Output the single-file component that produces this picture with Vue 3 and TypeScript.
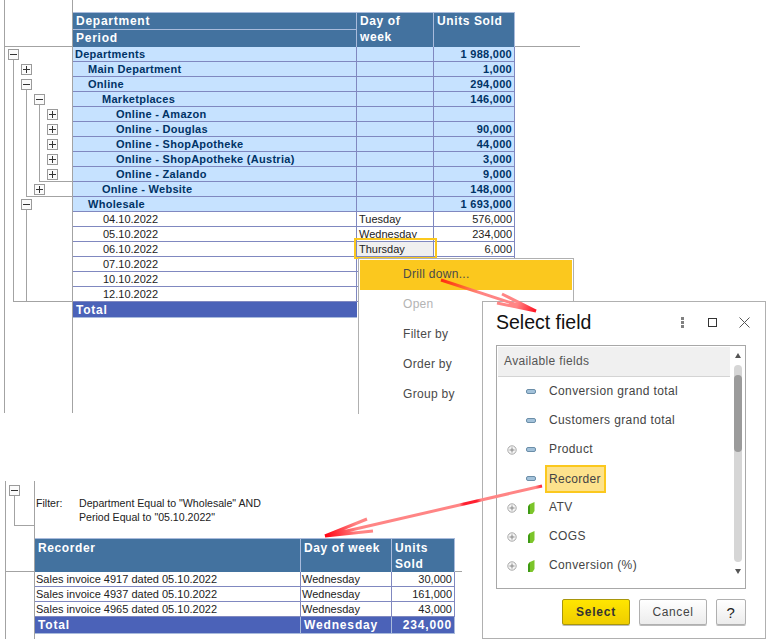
<script setup lang="ts">
interface Row { label: string; indent: number; day?: string; units: string; group: boolean; active?: boolean }
const rows: Row[] = [
  { label: 'Departments', indent: 2, units: '1 988,000', group: true },
  { label: 'Main Department', indent: 15, units: '1,000', group: true },
  { label: 'Online', indent: 15, units: '294,000', group: true },
  { label: 'Marketplaces', indent: 29, units: '146,000', group: true },
  { label: 'Online - Amazon', indent: 43, units: '', group: true },
  { label: 'Online - Douglas', indent: 43, units: '90,000', group: true },
  { label: 'Online - ShopApotheke', indent: 43, units: '44,000', group: true },
  { label: 'Online - ShopApotheke (Austria)', indent: 43, units: '3,000', group: true },
  { label: 'Online - Zalando', indent: 43, units: '9,000', group: true },
  { label: 'Online - Website', indent: 29, units: '148,000', group: true },
  { label: 'Wholesale', indent: 15, units: '1 693,000', group: true },
  { label: '04.10.2022', indent: 30, day: 'Tuesday', units: '576,000', group: false },
  { label: '05.10.2022', indent: 30, day: 'Wednesday', units: '234,000', group: false },
  { label: '06.10.2022', indent: 30, day: 'Thursday', units: '6,000', group: false, active: true },
  { label: '07.10.2022', indent: 30, units: '', group: false },
  { label: '10.10.2022', indent: 30, units: '', group: false },
  { label: '12.10.2022', indent: 30, units: '', group: false },
]
const lowerRows = [
  { doc: 'Sales invoice 4917 dated 05.10.2022', units: '30,000' },
  { doc: 'Sales invoice 4937 dated 05.10.2022', units: '161,000' },
  { doc: 'Sales invoice 4965 dated 05.10.2022', units: '43,000' },
]
interface Tog { x: number; y: number; open: boolean }
const toggles: Tog[] = [
  { x: 3, y: 2, open: true }, { x: 16, y: 17, open: false }, { x: 16, y: 32, open: true },
  { x: 29, y: 47, open: true }, { x: 42, y: 62, open: false }, { x: 42, y: 77, open: false },
  { x: 42, y: 92, open: false }, { x: 42, y: 107, open: false }, { x: 42, y: 122, open: false },
  { x: 29, y: 137, open: false }, { x: 16, y: 152, open: true },
]
const menu = ['Drill down...', 'Open', 'Filter by', 'Order by', 'Group by']
interface Field { name: string; kind: 'dash' | 'leaf'; plus: boolean; on?: boolean }
const fields: Field[] = [
  { name: 'Conversion grand total', kind: 'dash', plus: false },
  { name: 'Customers grand total', kind: 'dash', plus: false },
  { name: 'Product', kind: 'dash', plus: true },
  { name: 'Recorder', kind: 'dash', plus: false, on: true },
  { name: 'ATV', kind: 'leaf', plus: true },
  { name: 'COGS', kind: 'leaf', plus: true },
  { name: 'Conversion (%)', kind: 'leaf', plus: true },
]
</script>

<template>
  <div class="page">
    <section class="report">
      <div class="band">
        <div class="corner"></div>
        <div class="thead">
          <div class="th dept">Department</div>
          <div class="th day">Day of week</div>
          <div class="th units">Units Sold</div>
          <div class="th period">Period</div>
        </div>
      </div>
      <div class="body">
        <div class="gutter">
          <svg class="tree" width="67" height="366" viewBox="0 0 67 366">
            <g stroke="#a3a3a3" fill="none" shape-rendering="crispEdges">
              <path d="M8.5 12V254.5H67" />
              <path d="M21.5 42V149.5H67" />
              <path d="M34.5 57V134.5H67" />
              <path d="M21.5 162V254.5" />
            </g>
            <g v-for="(t, i) in toggles" :key="i" shape-rendering="crispEdges">
              <rect :x="t.x + 0.5" :y="t.y + 0.5" width="10" height="10" fill="#fbfbfb" stroke="#9a9a9a" />
              <path :d="`M${t.x + 2} ${t.y + 5.5}H${t.x + 9}`" stroke="#333" />
              <path v-if="!t.open" :d="`M${t.x + 5.5} ${t.y + 2}V${t.y + 9}`" stroke="#333" />
            </g>
          </svg>
        </div>
        <div class="rows">
          <div v-for="r in rows" :key="r.label" class="tr" :class="{ group: r.group }">
            <div class="td" :style="{ paddingLeft: r.indent + 'px' }">{{ r.label }}</div>
            <div class="td" :class="{ active: r.active }">{{ r.day }}</div>
            <div class="td num">{{ r.units }}</div>
          </div>
          <div class="total">Total</div>
        </div>
      </div>
    </section>

    <section class="lower">
      <div class="filter-row">
        <div class="corner-low">
          <svg width="28" height="57" viewBox="0 0 28 57">
            <g shape-rendering="crispEdges">
              <path d="M8.5 14V44.5H28" stroke="#a3a3a3" fill="none" />
              <rect x="3.5" y="4.5" width="10" height="10" fill="#fbfbfb" stroke="#9a9a9a" />
              <path d="M5 9.5H12" stroke="#333" />
            </g>
          </svg>
        </div>
        <div class="filter">
          <span class="f-label">Filter:</span>
          <span class="f-text">Department Equal to "Wholesale" AND<br />Period Equal to "05.10.2022"</span>
        </div>
      </div>
      <div class="band-low">
        <div class="corner-low"></div>
        <div class="thead-low">
          <div class="th">Recorder</div>
          <div class="th">Day of week</div>
          <div class="th">Units Sold</div>
        </div>
      </div>
      <div class="body-low">
        <div class="corner-low"></div>
        <div class="rows-low">
          <div v-for="r in lowerRows" :key="r.doc" class="tr-low">
            <div class="td">{{ r.doc }}</div>
            <div class="td">Wednesday</div>
            <div class="td num">{{ r.units }}</div>
          </div>
          <div class="total-low">
            <div>Total</div>
            <div>Wednesday</div>
            <div class="num">234,000</div>
          </div>
        </div>
      </div>
    </section>

    <div class="focus"></div>

    <div class="menu">
      <div v-for="(m, i) in menu" :key="m" class="m-item" :class="{ hot: i === 0, off: i === 1 }">{{ m }}</div>
    </div>

    <div class="dialog">
      <header class="d-head">
        <h1>Select field</h1>
        <div class="d-tools">
          <svg width="6" height="11" viewBox="0 0 6 11"><g fill="#808080"><rect x="1" y="0" width="3" height="3" /><rect x="1" y="4" width="3" height="3" /><rect x="1" y="8" width="3" height="3" /></g></svg>
          <svg width="9" height="9" viewBox="0 0 9 9"><rect x="0.5" y="0.5" width="8" height="8" fill="none" stroke="#333" /></svg>
          <svg width="11" height="11" viewBox="0 0 11 11"><path d="M.5.5l10 10M10.5.5l-10 10" stroke="#555" fill="none" /></svg>
        </div>
      </header>
      <div class="list">
        <div class="list-main">
          <div class="l-head">Available fields</div>
          <div class="l-rule"></div>
          <div v-for="f in fields" :key="f.name" class="field">
            <span class="plus">
              <svg v-if="f.plus" width="10" height="10" viewBox="0 0 10 10"><circle cx="5" cy="5" r="4.2" fill="#f4f4f4" stroke="#a8a8a8" /><path d="M2.5 5h5M5 2.5v5" stroke="#888" /></svg>
            </span>
            <span class="ico">
              <svg v-if="f.kind === 'dash'" width="10" height="5" viewBox="0 0 10 5"><rect x="0.5" y="0.5" width="9" height="4" rx="1.5" fill="#a3c2da" stroke="#6b8ea8" /></svg>
              <svg v-else width="7" height="12" viewBox="0 0 7 12"><path d="M2 2L6.5 0V9L4.5 12H0V4Z" fill="#7cc52a" /><path d="M0 5L2 2V12H0Z" fill="#3e9a14" /></svg>
            </span>
            <span class="f-name" :class="{ on: f.on }">{{ f.name }}</span>
          </div>
        </div>
        <div class="scroll">
          <span class="ar up"></span>
          <div class="track"><div class="thumb"></div></div>
          <span class="ar down"></span>
        </div>
      </div>
      <footer class="d-foot">
        <button class="btn primary">Select</button>
        <button class="btn">Cancel</button>
        <button class="btn help">?</button>
      </footer>
    </div>

    <svg class="arrows" width="766" height="639" viewBox="0 0 766 639">
      <defs>
        <linearGradient id="a1" gradientUnits="userSpaceOnUse" x1="441" y1="280" x2="536" y2="311">
          <stop offset="0" stop-color="#ff2a10" />
          <stop offset=".25" stop-color="#ff6a30" />
          <stop offset=".4" stop-color="#ff8585" />
          <stop offset=".8" stop-color="#ff8585" />
          <stop offset="1" stop-color="#ff1020" />
        </linearGradient>
        <linearGradient id="a2" gradientUnits="userSpaceOnUse" x1="542" y1="486" x2="325" y2="536">
          <stop offset="0" stop-color="#ff2030" />
          <stop offset=".03" stop-color="#ff8585" />
          <stop offset=".28" stop-color="#ff8585" />
          <stop offset=".3" stop-color="#ff2030" />
          <stop offset=".36" stop-color="#ff2030" />
          <stop offset=".38" stop-color="#ff8585" />
          <stop offset=".85" stop-color="#ff8585" />
          <stop offset="1" stop-color="#ff0010" />
        </linearGradient>
      </defs>
      <g fill="none" stroke-width="3">
        <path d="M441 280L536 311M502 294L536 311M497 303L536 311" stroke="url(#a1)" />
        <path d="M542 486L325 536M367 519L325 536M373 531L325 536" stroke="url(#a2)" />
      </g>
    </svg>
  </div>
</template>

<style>
html, body { margin: 0; background: #fff; }
</style>

<style scoped>
.page {
  position: relative;
  width: 766px;
  height: 639px;
  overflow: hidden;
  background: #fff;
  font-family: "Liberation Sans", Arial, sans-serif;
  font-size: 11px;
  color: #222;
}
.report { margin-left: 4px; width: 576px; }
.band { display: flex; border-bottom: 1px solid #a3a3a3; height: 46px; }
.corner { width: 67px; border-left: 1px solid #a3a3a3; border-right: 1px solid #a3a3a3; flex: none; }
.thead {
  margin-top: 12px;
  display: grid;
  grid-template-columns: 284px 77px 81px;
  grid-template-rows: 17px 17px;
  border-top: 1px solid #a9bbdc;
  margin-bottom: -1px;
  height: 35px;
  box-sizing: border-box;
}
.th {
  background: #43729f;
  color: #fff;
  font-weight: 700;
  font-size: 12px;
  letter-spacing: .6px;
  line-height: 16px;
  padding: 0 0 0 3px;
  border-right: 1px solid #a9bbdc;
  box-sizing: border-box;
}
.dept { border-bottom: 1px solid #a9bbdc; letter-spacing: .75px; }
.period { letter-spacing: .75px; }
.day { grid-row: 1 / 3; grid-column: 2; padding-right: 12px; }
.units { grid-row: 1 / 3; grid-column: 3; }
.period { grid-column: 1; grid-row: 2; }
.body { display: flex; height: 366px; }
.gutter { width: 67px; flex: none; border-left: 1px solid #a3a3a3; border-right: 1px solid #a3a3a3; }
.tree { display: block; }
.rows { flex: none; width: 442px; }
.tr {
  display: grid;
  grid-template-columns: 284px 77px 81px;
  height: 15px;
  box-sizing: border-box;
  border-bottom: 1px solid #8088c0;
}
.td {
  border-right: 1px solid #8088c0;
  padding: 0 2px;
  line-height: 14px;
  white-space: nowrap;
  overflow: hidden;
  box-sizing: border-box;
}
.group .td { background: #c6e2ff; color: #003366; font-weight: 700; letter-spacing: .28px; }
.num { text-align: right; }
.active { background: #f0f0f0; }
.total {
  height: 16px;
  width: 284px;
  background: #4b62b8;
  color: #fff;
  font-weight: 700;
  font-size: 12px;
  letter-spacing: .75px;
  line-height: 16px;
  padding-left: 3px;
  box-sizing: border-box;
  border-bottom: 1px solid #a9bbdc;
}

.lower { margin: 68px 0 0 5px; width: 457px; }
.corner-low { width: 28px; flex: none; border-left: 1px solid #a3a3a3; border-right: 1px solid #a3a3a3; }
.corner-low svg { display: block; }
.filter-row { display: flex; height: 57px; }
.filter { display: flex; padding: 15px 0 0 1px; line-height: 14px; font-size: 10.6px; }
.f-label { width: 43px; }
.band-low { display: flex; border-bottom: 1px solid #a3a3a3; height: 33px; }
.thead-low {
  display: grid;
  grid-template-columns: 266px 91px 63px;
  height: 34px;
  border-top: 1px solid #a9bbdc;
  box-sizing: border-box;
}
.thead-low .th { padding-top: 1px; }
.thead-low .th:nth-child(3) { padding-right: 20px; }
.body-low { display: flex; height: 67px; }
.rows-low { width: 420px; }
.tr-low {
  display: grid;
  grid-template-columns: 266px 91px 63px;
  height: 15px;
  box-sizing: border-box;
  border-bottom: 1px solid #8088c0;
}
.tr-low .td { padding: 0 2px 0 1px; }
.tr-low .num { padding-right: 2px; }
.total-low {
  display: grid;
  grid-template-columns: 266px 91px 63px;
  height: 17px;
  background: #4b62b8;
  color: #fff;
  font-weight: 700;
  font-size: 12px;
  letter-spacing: .85px;
  line-height: 16px;
  box-sizing: border-box;
  border-bottom: 1px solid #a9bbdc;
}
.total-low > div { padding: 0 2px 0 3px; border-right: 1px solid #a9bbdc; white-space: nowrap; }

.focus {
  position: absolute;
  left: 354px;
  top: 238px;
  width: 83px;
  height: 21px;
  box-sizing: border-box;
  border: 2px solid #fbc81e;
}
.menu {
  position: absolute;
  left: 358px;
  top: 258px;
  width: 216px;
  height: 156px;
  box-sizing: border-box;
  background: #fff;
  border: 1px solid #b0b0b0;
  border-bottom: 0;
  padding: 1px 1px 0;
}
.m-item {
  height: 30px;
  line-height: 29px;
  padding-left: 43px;
  font-size: 12px;
  letter-spacing: .3px;
  color: #4a4a4a;
}
.m-item.hot { background: #fbc81e; }
.m-item.off { color: #b4b4b4; }

.dialog {
  position: absolute;
  left: 482px;
  top: 301px;
  width: 284px;
  height: 338px;
  box-sizing: border-box;
  background: #fff;
  border: 1px solid #b0b0b0;
  display: flex;
  flex-direction: column;
  padding: 0 19px 12px 13px;
}
.d-head { display: flex; align-items: center; justify-content: space-between; height: 43px; flex: none; }
.d-head h1 { margin: -2px 0 0; font-size: 19.5px; font-weight: 400; color: #111; }
.d-tools { display: flex; align-items: center; gap: 22px; margin: -3px -4px 0 0; }
.d-tools svg { display: block; }
.list {
  flex: none;
  height: 244px;
  width: 250px;
  box-sizing: border-box;
  border: 1px solid #a8a8a8;
  display: flex;
}
.list-main { flex: none; width: 233px; padding: 1px 0 0 1px; box-sizing: border-box; }
.l-head {
  height: 29px;
  line-height: 28px;
  background: #f0f0f0;
  padding-left: 6px;
  font-size: 12px;
  letter-spacing: .35px;
  color: #555;
}
.l-rule { height: 1px; background: #d4d4d4; }
.field { display: flex; align-items: center; height: 29px; font-size: 12px; letter-spacing: .38px; color: #444; }
.plus { width: 10px; margin-left: 9px; display: flex; }
.ico { width: 10px; margin-left: 9px; display: flex; justify-content: center; }
.f-name { margin-left: 13px; white-space: nowrap; line-height: 25px; }
.f-name.on {
  margin-left: 9px;
  height: 28px;
  line-height: 24px;
  box-sizing: border-box;
  width: 61px;
  background: #fde28c;
  border: 2px solid #fbc81e;
  padding-left: 2px;
  letter-spacing: .3px;
}
.scroll { flex: 1; display: flex; flex-direction: column; align-items: center; padding-top: 7px; box-sizing: border-box; }
.ar { width: 0; height: 0; border-left: 3px solid transparent; border-right: 3px solid transparent; flex: none; }
.ar.up { border-bottom: 5px solid #555; }
.ar.down { border-top: 5px solid #555; margin-top: 7px; }
.track { width: 8px; height: 197px; margin-top: 7px; background: #d6d6d6; border-radius: 4px; padding-top: 10px; box-sizing: border-box; flex: none; }
.thumb { height: 77px; background: #9b9b9b; border-radius: 4px; }
.d-foot { display: flex; justify-content: flex-end; gap: 9px; margin-top: 10px; width: 250px; }
.btn {
  width: 68px;
  height: 26px;
  box-sizing: border-box;
  padding: 0;
  background: linear-gradient(#fff, #ececec);
  border: 1px solid #b0b0b0;
  border-radius: 2px;
  box-shadow: 0 1px 0 #bbb;
  font-family: inherit;
  font-size: 12px;
  letter-spacing: .6px;
  color: #444;
}
.btn.primary {
  background: linear-gradient(#ffe600, #efcd00);
  border-color: #a8960c;
  font-weight: 700;
  letter-spacing: .8px;
  color: #333;
}
.btn.help { width: 30px; font-size: 15px; font-weight: 400; color: #222; }
.arrows { position: absolute; left: 0; top: 0; pointer-events: none; }
</style>
